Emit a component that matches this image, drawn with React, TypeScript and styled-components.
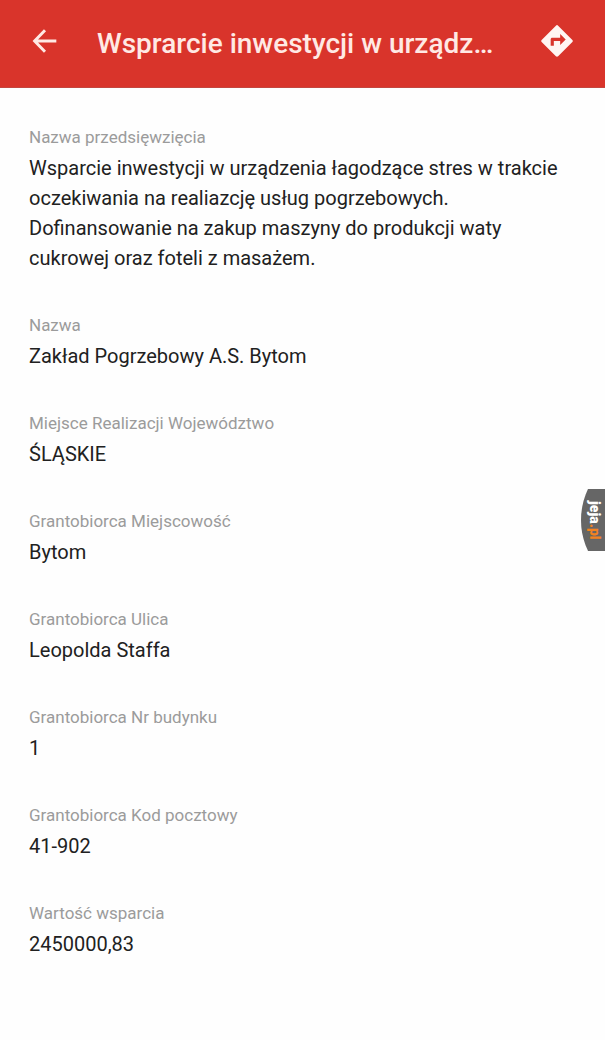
import React from "react";
import styled, { createGlobalStyle } from "styled-components";

const GlobalStyle = createGlobalStyle`
  *, *::before, *::after { box-sizing: border-box; }
  body {
    margin: 0;
    background: #fefefe;
    color: #212121;
    font-family: Roboto, "Liberation Sans", sans-serif;
  }
`;

const Page = styled.div`
  min-height: 100vh;
`;

const AppBar = styled.header`
  display: flex;
  align-items: center;
  height: 88px;
  padding: 0 29px 6px;
  background: #d9342b;
  border-bottom: 1px solid #c4463f;
  color: #ffe9e4;
`;

const Title = styled.h1`
  flex: 1;
  min-width: 0;
  margin: 0 36px;
  padding-top: 6px;
  overflow: hidden;
  white-space: nowrap;
  text-overflow: ellipsis;
  font-size: 28px;
  font-weight: 500;
  line-height: 36px;
`;

const IconButton = styled.button`
  display: flex;
  flex: none;
  padding: 0;
  border: 0;
  background: none;
  color: inherit;
  cursor: pointer;
`;

const Details = styled.dl`
  display: flex;
  flex-direction: column;
  gap: 40px;
  margin: 0;
  padding: 37px 29px 72px;
`;

const Field = styled.div``;

const Label = styled.dt`
  color: #9b9b9b;
  font-size: 17px;
  line-height: 24px;
`;

const Value = styled.dd`
  margin: 4px 0 0;
  font-size: 20px;
  line-height: 30px;
`;

const Badge = styled.a`
  position: fixed;
  top: 489px;
  right: 0;
  display: flex;
  align-items: center;
  justify-content: center;
  width: 24px;
  height: 62px;
  padding-left: 4px;
  clip-path: ellipse(60px 66px at 60px 50%);
  background: #666;
  color: #fff;
  font-size: 14px;
  font-weight: 900;
  line-height: 20px;
  text-decoration: none;
  writing-mode: vertical-rl;
`;

const BadgeSuffix = styled.span`
  color: #f58220;
`;

const fields = [
  {
    label: "Nazwa przedsięwzięcia",
    value:
      "Wsparcie inwestycji w urządzenia łagodzące stres w trakcie oczekiwania na realiazcję usług pogrzebowych. Dofinansowanie na zakup maszyny do produkcji waty cukrowej oraz foteli z masażem.",
  },
  { label: "Nazwa", value: "Zakład Pogrzebowy A.S. Bytom" },
  { label: "Miejsce Realizacji Województwo", value: "ŚLĄSKIE" },
  { label: "Grantobiorca Miejscowość", value: "Bytom" },
  { label: "Grantobiorca Ulica", value: "Leopolda Staffa" },
  { label: "Grantobiorca Nr budynku", value: "1" },
  { label: "Grantobiorca Kod pocztowy", value: "41-902" },
  { label: "Wartość wsparcia", value: "2450000,83" },
];

const BackIcon = () => (
  <svg width="32" height="32" viewBox="0 0 24 24" fill="none" stroke="currentColor" strokeWidth="2.2" aria-hidden="true">
    <path d="M20.5 12H4.5M12 4L4.2 12l7.8 8" />
  </svg>
);

const DirectionsIcon = () => (
  <svg width="38" height="38" viewBox="0 0 24 24" fill="#fff5f2" aria-hidden="true">
    <path d="M21.71 11.29l-9-9a.996.996 0 0 0-1.41 0l-9 9a.996.996 0 0 0 0 1.41l9 9c.39.39 1.02.39 1.41 0l9-9a.996.996 0 0 0 0-1.41zM14 14.5V12h-4v3H8v-4c0-.55.45-1 1-1h5V7.5l3.5 3.5-3.5 3.5z" />
  </svg>
);

export default function App() {
  return (
    <Page>
      <GlobalStyle />
      <AppBar>
        <IconButton type="button" aria-label="Wstecz">
          <BackIcon />
        </IconButton>
        <Title>Wsprarcie inwestycji w urządz…</Title>
        <IconButton type="button" aria-label="Wyznacz trasę">
          <DirectionsIcon />
        </IconButton>
      </AppBar>
      <main>
        <Details>
          {fields.map(({ label, value }) => (
            <Field key={label}>
              <Label>{label}</Label>
              <Value>{value}</Value>
            </Field>
          ))}
        </Details>
      </main>
      <Badge href="#jeja">
        <span>
          jeja<BadgeSuffix>.pl</BadgeSuffix>
        </span>
      </Badge>
    </Page>
  );
}
